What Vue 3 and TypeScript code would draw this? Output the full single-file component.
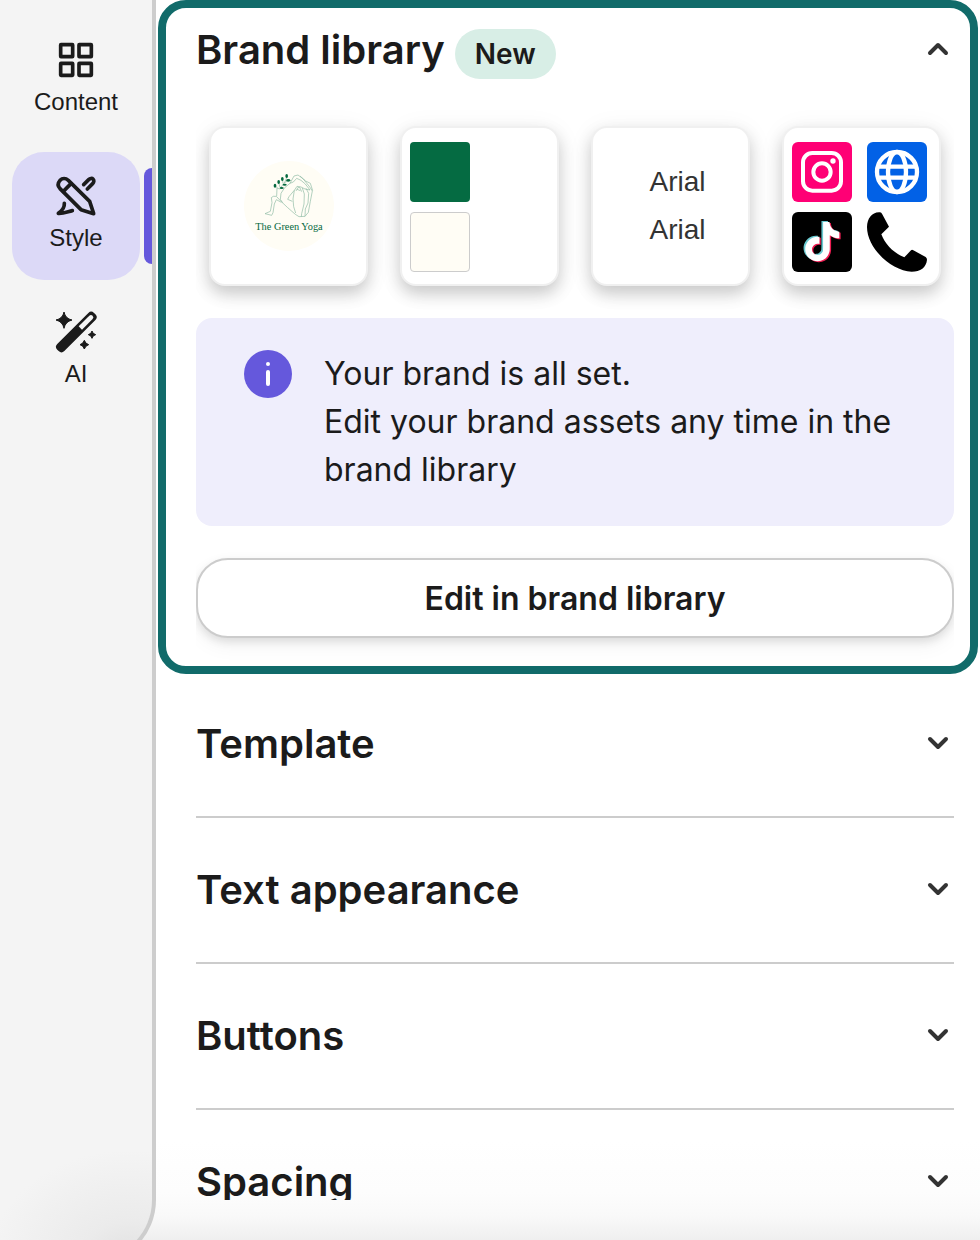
<script setup lang="ts">
import { ref } from 'vue'

type NavId = 'content' | 'style' | 'ai'

const navItems: { id: NavId; label: string }[] = [
  { id: 'content', label: 'Content' },
  { id: 'style', label: 'Style' },
  { id: 'ai', label: 'AI' },
]
const active = ref<NavId>('style')
const brandOpen = ref(true)
const sections = ['Template', 'Text appearance', 'Buttons', 'Spacing']
const fonts = ['Arial', 'Arial']

const tiktokNote =
  'M12.525.02c1.31-.02 2.61-.01 3.91-.02.08 1.53.63 3.09 1.75 4.17 1.12 1.11 2.7 1.62 4.24 1.79v4.03c-1.44-.05-2.89-.35-4.2-.97-.57-.26-1.1-.59-1.62-.93-.01 2.92.01 5.84-.02 8.75-.08 1.4-.54 2.79-1.35 3.94-1.31 1.92-3.58 3.17-5.91 3.21-1.43.08-2.86-.31-4.08-1.03-2.02-1.19-3.44-3.37-3.65-5.71-.02-.5-.03-1-.01-1.49.18-1.9 1.12-3.72 2.58-4.96 1.66-1.44 3.98-2.13 6.15-1.72.02 1.48-.04 2.96-.04 4.44-.99-.32-2.15-.23-3.02.37-.63.41-1.11 1.04-1.36 1.75-.21.51-.15 1.07-.14 1.61.24 1.64 1.82 3.02 3.5 2.87 1.12-.01 2.19-.66 2.77-1.61.19-.33.4-.67.41-1.06.1-1.79.06-3.57.07-5.36.01-4.03-.01-8.05.02-12.07z'
</script>

<template>
  <div class="shell">
    <nav class="sidebar">
      <button
        v-for="item in navItems"
        :key="item.id"
        type="button"
        class="nav-item"
        :class="{ active: active === item.id }"
        @click="active = item.id"
      >
        <svg v-if="item.id === 'content'" class="nav-icon" viewBox="156 48 144 144" fill="none" stroke="#1b1b1b" stroke-width="11">
          <rect x="182" y="74" width="36" height="36" rx="1" />
          <rect x="237" y="74" width="37" height="36" rx="1" />
          <rect x="182" y="130" width="36" height="36" rx="1" />
          <rect x="237" y="130" width="37" height="36" rx="1" />
        </svg>
        <svg v-else-if="item.id === 'style'" class="nav-icon" viewBox="156 96 144 144" fill="none" stroke="#1b1b1b" stroke-width="11" stroke-linecap="round" stroke-linejoin="round">
          <path d="M180 146 C173 138 173 129 180 121 C187 114 197 114 205 121 L269 184 L281 221 L243 209 Z" />
          <path d="M190 154 L213 131" />
          <path d="M251 134 L266 119 C270 115 276 114 279 117 C283 121 282 127 278 131 L262 147" />
          <path d="M193 190 C194 204 188 211 175 220 C190 221 203 215 217 212" />
        </svg>
        <svg v-else class="nav-icon" viewBox="156 504 144 144" fill="#1b1b1b">
          <rect x="-78" y="-15" width="156" height="30" rx="12" transform="translate(229 576) rotate(-45)" />
          <path d="M17 -7 L62 -7 Q69 -7 69 0 Q69 7 62 7 L17 7 Z" fill="#f4f4f4" transform="translate(229 576) rotate(-45)" />
          <path d="M192 516 Q196 536 216 540 Q196 545 192 565 Q188 545 168 540 Q188 536 192 516Z" stroke="#1b1b1b" stroke-width="3" />
          <path d="M276 573 Q278 582 287 584 Q278 586 276 595 Q274 586 265 584 Q274 582 276 573Z" stroke="#1b1b1b" stroke-width="3" />
          <path d="M253 601 Q256 611 266 614 Q256 617 253 627 Q250 617 240 614 Q250 611 253 601Z" stroke="#1b1b1b" stroke-width="3" />
        </svg>
        <span>{{ item.label }}</span>
      </button>
    </nav>

    <main class="main">
      <div class="scroller">
        <section class="brand">
          <header class="brand-head">
            <h2 class="title">Brand library</h2>
            <span class="badge">New</span>
            <button type="button" class="toggle" aria-label="Toggle brand library" :aria-expanded="brandOpen" @click="brandOpen = !brandOpen">
              <svg class="chevron" viewBox="0 0 32 32"><path :d="brandOpen ? 'M8 19 L16 11 L24 19' : 'M8 11 L16 19 L24 11'" /></svg>
            </button>
          </header>

          <div v-show="brandOpen" class="brand-body">
            <div class="cards">
              <div class="card logo-card">
                <svg class="logo" viewBox="132 123 270 270" role="img" aria-label="The Green Yoga logo">
                  <circle cx="267" cy="258" r="135" fill="#fffdf5" />
                  <g fill="none" stroke="#8db9a3" stroke-width="2" stroke-linejoin="round">
                    <path d="M195 281 L211 274 L216 248 L214 233 Q218 227 229 229 L243 244 L262 262 L286 283 L297 290 L315 289 L325 277 L331 244 L337 213 L330 202 L310 177 L294 165 L282 168 L270 190 L254 203 L243 220 L241 238 L248 248" />
                    <path d="M195 281 L215 286 L219 278 L223 252 L229 239 L244 247" />
                    <path d="M270 190 L280 186 L290 175 L303 181 L316 192 L330 210 L315 207 L303 201 L291 199 L283 211 L276 219 L267 230 L263 238 L277 244" />
                    <path d="M283 211 L279 237 L281 260 L287 279 M307 204 L313 222 L312 252 L305 281 L304 290 M318 205 L326 220 L324 249 L316 267 L315 289" />
                    <path d="M288 213 Q293 199 299 202 L305 215 M291 208 L301 212 M300 168 L317 183 L331 190 L338 212" />
                    <path d="M230 228 L231 204 L239 207 L254 187 L262 169 M232 204 L225 196 M240 202 L236 187 M249 190 L247 177 M253 188 L265 182" />
                  </g>
                  <g fill="#05693f">
                    <ellipse cx="225" cy="197" rx="4" ry="6" />
                    <ellipse cx="236" cy="186" rx="4" ry="6" />
                    <ellipse cx="247" cy="177" rx="4" ry="6" />
                    <ellipse cx="260" cy="168" rx="4" ry="6" />
                    <ellipse cx="265" cy="181" rx="6" ry="4" />
                    <ellipse cx="254" cy="194" rx="6" ry="3" />
                    <ellipse cx="245" cy="204" rx="6" ry="3" />
                  </g>
                  <text x="267" y="330" text-anchor="middle" class="logo-text">The Green Yoga</text>
                </svg>
              </div>

              <div class="card tiles">
                <span class="tile green"></span>
                <span class="tile cream"></span>
              </div>

              <div class="card font-card">
                <span v-for="(font, i) in fonts" :key="i">{{ font }}</span>
              </div>

              <div class="card tiles socials">
                <svg class="tile" viewBox="51 66 180 180" role="img" aria-label="Instagram">
                  <rect x="51" y="66" width="180" height="180" fill="#ff0075" />
                  <g fill="none" stroke="#fff" stroke-width="12">
                    <rect x="84" y="99" width="114" height="113" rx="28" />
                    <circle cx="141" cy="156" r="26" />
                  </g>
                  <circle cx="174" cy="123" r="8" fill="#fff" />
                </svg>
                <svg class="tile" viewBox="276 66 180 180" role="img" aria-label="Website">
                  <rect x="276" y="66" width="180" height="180" fill="#0261e6" />
                  <g fill="none" stroke="#fff" stroke-width="13">
                    <circle cx="366" cy="156" r="60" />
                    <ellipse cx="366" cy="156" rx="27" ry="60" />
                    <path d="M311 140 H421 M311 173 H421" />
                  </g>
                </svg>
                <svg class="tile" viewBox="51 276 180 180" role="img" aria-label="TikTok">
                  <rect x="51" y="276" width="180" height="180" fill="#000" />
                  <path :d="tiktokNote" fill="#69c9d0" transform="translate(78 303) scale(4.9)" />
                  <path :d="tiktokNote" fill="#ee1d52" transform="translate(87 309) scale(4.9)" />
                  <path :d="tiktokNote" fill="#fff" transform="translate(83 306) scale(4.9)" />
                </svg>
                <svg class="tile phone" viewBox="276 276 180 180" role="img" aria-label="Phone">
                  <path d="M312 277 Q318 276 321 281 L342 320 L319 343 C330 372 356 400 388 412 L408 391 Q411 388 415 391 L452 411 Q456 414 456 419 C454 442 436 455 410 455 C350 453 276 385 276 321 C277 295 290 278 312 277Z" />
                </svg>
              </div>
            </div>

            <div class="notice">
              <svg class="info" viewBox="0 0 48 48" aria-hidden="true">
                <circle cx="24" cy="24" r="24" fill="#6558dc" />
                <circle cx="24" cy="14" r="2" fill="#fff" />
                <rect x="22" y="20" width="4" height="16" rx="2" fill="#fff" />
              </svg>
              <p>Your brand is all set.<br />Edit your brand assets any time in the brand library</p>
            </div>

            <div class="edit-wrap">
              <button type="button" class="edit">Edit in brand library</button>
            </div>
          </div>
        </section>

        <h2 v-for="name in sections" :key="name" class="row">
          <button type="button" class="title row-button" aria-expanded="false">
            <span>{{ name }}</span>
            <svg class="chevron" viewBox="0 0 32 32"><path d="M8 11 L16 19 L24 11" /></svg>
          </button>
        </h2>
      </div>
      <footer class="fade"></footer>
    </main>
  </div>
</template>

<style>
body {
  margin: 0;
}
</style>

<style scoped>
* {
  box-sizing: border-box;
}
.shell {
  display: flex;
  height: 100vh;
  overflow: hidden;
  color: #1b1b1b;
  font-family: Inter, 'Liberation Sans', sans-serif;
  background: linear-gradient(to top, #efefef, #f9f9f9 24px, #fdfdfd 48px, #fff 100px);
}
button {
  margin: 0;
  padding: 0;
  border: 0;
  background: none;
  color: inherit;
  font: inherit;
  cursor: pointer;
}
.sidebar {
  flex: none;
  display: flex;
  flex-direction: column;
  gap: 8px;
  width: 156px;
  margin-bottom: -24px;
  padding: 16px 12px;
  border-right: 4px solid #cdcdcd;
  border-bottom: 4px solid #c4c4c4;
  border-bottom-right-radius: 64px;
  background: radial-gradient(ellipse 140px 110px at 130px 100%, #e0e0e0, #ebebeb 35%, #f4f4f4) #f4f4f4;
}
.nav-item {
  position: relative;
  display: flex;
  flex-direction: column;
  align-items: center;
  gap: 4px;
  height: 128px;
  padding-top: 20px;
  border-radius: 32px;
  font: 24px/28px 'Liberation Sans', Arial, sans-serif;
}
.nav-item.active {
  background: #dcd9f7;
}
.nav-item.active::after {
  content: '';
  position: absolute;
  top: 16px;
  right: -12px;
  width: 8px;
  height: 96px;
  border-radius: 8px 0 0 8px;
  background: #6558dc;
}
.nav-icon {
  width: 48px;
  height: 48px;
}
.main {
  flex: 1;
  min-width: 0;
  display: flex;
  flex-direction: column;
  padding: 0 2px;
}
.scroller {
  flex: 1;
  min-height: 0;
  overflow: hidden;
}
.fade {
  flex: none;
  height: 40px;
}
.brand {
  margin-bottom: -2px;
  padding: 0 16px 0 30px;
  border: 8px solid #116b6a;
  border-radius: 28px;
  background: #fff;
}
.brand-head {
  display: flex;
  align-items: center;
  height: 84px;
}
.title {
  margin: 0;
  font-size: 40px;
  line-height: 48px;
  font-weight: 600;
}
.badge {
  margin: 8px 0 0 10px;
  padding: 0 20px;
  border-radius: 25px;
  background: #d8eee6;
  font-size: 28px;
  line-height: 50px;
  font-weight: 600;
}
.toggle {
  margin-left: auto;
  height: 32px;
}
.chevron {
  flex: none;
  display: block;
  width: 32px;
  height: 32px;
  fill: none;
  stroke: #333;
  stroke-width: 4;
  stroke-linecap: round;
  stroke-linejoin: round;
}
.cards {
  display: grid;
  grid-template-columns: repeat(4, 1fr);
  gap: 32px;
  padding: 34px 13px 32px;
  overflow: hidden;
}
.card {
  height: 160px;
  border: 2px solid #f0f0f0;
  border-radius: 16px;
  background: #fff;
  box-shadow: 0 8px 16px rgba(0, 0, 0, 0.18), 0 4px 28px rgba(0, 0, 0, 0.06);
}
.logo-card {
  display: flex;
  align-items: center;
  justify-content: center;
}
.logo {
  width: 90px;
  height: 90px;
}
.logo-text {
  font-family: 'Liberation Serif', serif;
  font-size: 31px;
  fill: #05693f;
}
.tiles {
  display: grid;
  grid-template-columns: 60px 60px;
  grid-auto-rows: 60px;
  gap: 10px 15px;
  padding: 14px 8px;
}
.tile {
  grid-column: 1;
  width: 60px;
  height: 60px;
  border-radius: 4px;
}
.green {
  background: #056b42;
}
.cream {
  border: 1px solid #ccc;
  background: #fffdf5;
}
.socials .tile {
  grid-column: auto;
  border-radius: 6px;
}
.socials .phone {
  border-radius: 0;
}
.font-card {
  display: flex;
  flex-direction: column;
  align-items: center;
  justify-content: center;
  padding-left: 14px;
  color: #333;
  font: 28px/48px 'Liberation Sans', Arial, sans-serif;
}
.notice {
  display: flex;
  gap: 32px;
  padding: 32px 48px;
  border-radius: 16px;
  background: #efeefc;
}
.info {
  flex: none;
  width: 48px;
  height: 48px;
}
.notice p {
  margin: 0;
  font-size: 32px;
  line-height: 48px;
}
.edit-wrap {
  padding: 32px 0 28px;
  overflow: hidden;
}
.edit {
  display: block;
  width: 100%;
  height: 80px;
  border: 2px solid #ccc;
  border-radius: 32px;
  background: #fff;
  box-shadow: 0 4px 8px rgba(0, 0, 0, 0.1), 0 8px 20px rgba(0, 0, 0, 0.05);
  font-size: 32px;
  font-weight: 600;
}
.row {
  margin: 0 24px 0 38px;
  border-bottom: 2px solid #ccc;
}
.row-button {
  display: flex;
  align-items: center;
  justify-content: space-between;
  width: 100%;
  height: 144px;
  text-align: left;
}
</style>
